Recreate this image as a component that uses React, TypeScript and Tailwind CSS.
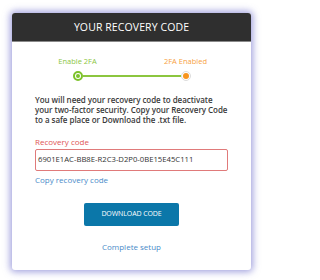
import React from "react";

export default function App() {
  return (
    <div className="w-[262px] h-[280px] bg-white pt-[13px] pl-[12px]" style={{ fontFamily: '"Open Sans", "Noto Sans", sans-serif' }}>
      <div className="w-[239px] h-[257px] bg-white rounded-[3px] overflow-hidden shadow-[0_0_7px_2px_rgba(100,100,200,0.6)] flex flex-col">
        <div className="h-[29px] bg-[#2f2f2f] border-b border-[#8a8a8a] flex items-center justify-center text-white text-[10.5px] leading-none tracking-[0.1px]">
          YOUR RECOVERY CODE
        </div>
        <div className="flex flex-col px-[23px]">
          <div className="mt-[14px] mx-auto w-[168px] flex justify-between text-[7.5px] leading-[10px]">
            <span className="w-[60px] text-center text-[#8cc63f]">Enable 2FA</span>
            <span className="w-[60px] text-center text-[#f7a142]">2FA Enabled</span>
          </div>
          <div className="mt-[5px] mx-auto w-[118px] flex items-center">
            <div className="w-[10px] h-[10px] rounded-full border-[2px] border-[#7dc22a] flex items-center justify-center">
              <div className="w-[4px] h-[4px] rounded-full bg-[#7dc22a]" />
            </div>
            <div className="flex-1 h-[1.5px] bg-[#8cc63f]" />
            <div className="w-[10px] h-[10px] rounded-full border-[1.5px] border-[#dcdcdc] flex items-center justify-center">
              <div className="w-[6px] h-[6px] rounded-full bg-[#f7941d]" />
            </div>
          </div>
          <p className="mt-[14px] text-[8px] leading-[10px] font-semibold tracking-[-0.05px] text-[#3a3a3a] whitespace-nowrap">
            <span className="block">You will need your recovery code to deactivate</span>
            <span className="block">your two-factor security. Copy your Recovery Code</span>
            <span className="block">to a safe place or Download the .txt file.</span>
          </p>
          <div className="mt-[12px] text-[8px] leading-[10px] text-[#e05555]">Recovery code</div>
          <div className="mt-[2px] h-[22px] border border-[#e07a7a] rounded-[2px] flex items-center px-[2px] text-[7.7px] text-[#333]">
            6901E1AC-BB8E-R2C3-D2P0-0BE15E45C111
          </div>
          <div className="mt-[4px] text-[8px] leading-[10px] text-[#4a8bc9]">Copy recovery code</div>
          <div className="mt-[18px] mx-auto w-[95px] h-[23px] rounded-[2px] bg-[#0b77a9] flex items-center justify-center text-white text-[7px] tracking-[-0.1px]">
            DOWNLOAD CODE
          </div>
          <div className="mt-[16px] text-center text-[8px] leading-[10px] text-[#4a8bc9]">Complete setup</div>
        </div>
      </div>
    </div>
  );
}
